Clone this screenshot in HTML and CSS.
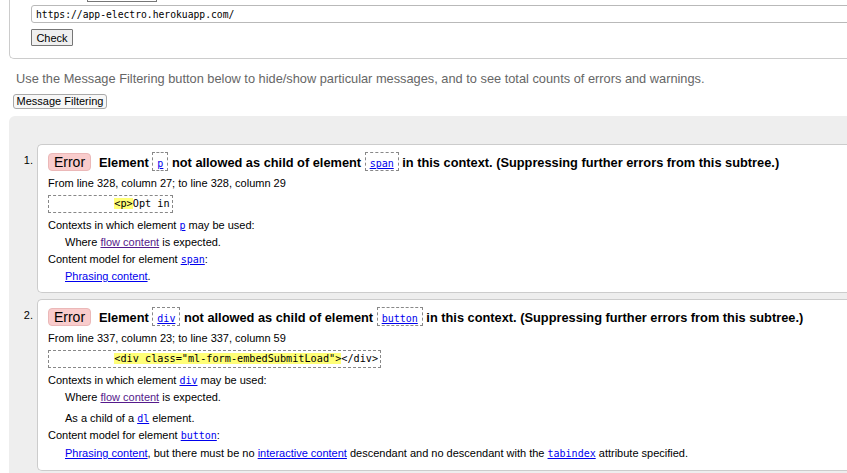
FILE: index.html
```html
<!DOCTYPE html>
<html lang="en">
<head>
<meta charset="utf-8">
<title>Validator</title>
<link rel="stylesheet" href="styles.css">
</head>
<body>
<div class="page">
  <form class="checkform">
    <div class="byrow"><span class="bylabel"></span><span class="select"></span></div>
    <input class="url" type="text" value="https://app-electro.herokuapp.com/">
    <div class="btnrow"><button type="button" class="check">Check</button></div>
  </form>
  <p class="hint">Use the Message Filtering button below to hide/show particular messages, and to see total counts of errors and warnings.</p>
  <button class="filter" type="button">Message Filtering</button>
  <div class="results">
    <ol class="messages">
      <li class="item">
        <span class="num">1.</span>
        <div class="msg">
          <p class="head"><span class="badge">Error</span><span class="title">Element <code class="tag"><a href="#p">p</a></code> not allowed as child of element <code class="tag"><a href="#span">span</a></code> in this context. (Suppressing further errors from this subtree.)</span></p>
          <p class="loc">From line 328, column 27; to line 328, column 29</p>
          <div class="extractrow"><code class="extract">          <mark>&lt;p&gt;</mark>Opt in</code></div>
          <p class="line">Contexts in which element <a class="cl" href="#p">p</a> may be used:</p>
          <p class="line indent">Where <a class="visited" href="#flow">flow content</a> is expected.</p>
          <p class="line">Content model for element <a class="cl" href="#span">span</a>:</p>
          <p class="line indent"><a href="#phrasing">Phrasing content</a>.</p>
        </div>
      </li>
      <li class="item">
        <span class="num">2.</span>
        <div class="msg">
          <p class="head"><span class="badge">Error</span><span class="title">Element <code class="tag"><a href="#div">div</a></code> not allowed as child of element <code class="tag"><a href="#button">button</a></code> in this context. (Suppressing further errors from this subtree.)</span></p>
          <p class="loc">From line 337, column 23; to line 337, column 59</p>
          <div class="extractrow"><code class="extract">          <mark>&lt;div class="ml-form-embedSubmitLoad"&gt;</mark>&lt;/div&gt;</code></div>
          <p class="line">Contexts in which element <a class="cl" href="#div">div</a> may be used:</p>
          <p class="line indent">Where <a class="visited" href="#flow">flow content</a> is expected.</p>
          <p class="line indent gap">As a child of a <a class="cl" href="#dl">dl</a> element.</p>
          <p class="line">Content model for element <a class="cl" href="#button">button</a>:</p>
          <p class="line indent last"><a href="#phrasing">Phrasing content</a>, but there must be no <a href="#interactive">interactive content</a> descendant and no descendant with the <a class="cl" href="#tabindex">tabindex</a> attribute specified.</p>
        </div>
      </li>
    </ol>
  </div>
</div>
</body>
</html>
```
FILE: styles.css
```css
html, body {
  margin: 0;
  padding: 0;
}
body {
  font-family: "Liberation Sans", Arial, sans-serif;
  color: #000;
  background: #fff;
  width: 847px;
  height: 473px;
  overflow: hidden;
}
.page {
  margin-right: -60px;
}
a {
  color: #0000ee;
  text-decoration: underline;
}
a.visited {
  color: #551a8b;
}
a.cl {
  font-family: "DejaVu Sans Mono", monospace;
  font-size: 10px;
}

/* top form */
.checkform {
  margin: -16px 0 0 9px;
  border-left: 1px solid #cccccc;
  border-bottom: 1px solid #cccccc;
  border-bottom-left-radius: 5px;
  padding: 0 0 12px 21px;
}
.byrow {
  height: 18px;
  display: flex;
  align-items: flex-end;
}
.bylabel {
  width: 50px;
  height: 18px;
}
.select {
  box-sizing: border-box;
  width: 70px;
  height: 16px;
  margin-left: 6px;
  border: 1px solid #767676;
  background: #fff;
}
.url {
  display: block;
  box-sizing: border-box;
  width: 900px;
  height: 18px;
  margin: 3px 0 0 0;
  padding: 0 4px;
  border: 1px solid #b9b9b9;
  border-radius: 3px;
  font-family: "DejaVu Sans Mono", monospace;
  font-size: 9.7px;
  color: #000;
  background: #fff;
}
.btnrow {
  margin-top: 6px;
  display: flex;
}
.check {
  box-sizing: border-box;
  height: 17px;
  width: 42px;
  padding: 0;
  border: 1px solid #767676;
  border-radius: 1px;
  background: #efefef;
  font-family: "Liberation Sans", Arial, sans-serif;
  font-size: 11px;
  color: #000;
}

/* hint */
.hint {
  margin: 12px 0 0 16px;
  font-size: 12.8px;
  line-height: 16px;
  color: #666666;
}
.filter {
  display: block;
  box-sizing: border-box;
  margin: 7px 0 0 13px;
  height: 15px;
  width: 94px;
  padding: 0;
  border: 1px solid #a9a9a9;
  border-radius: 3px;
  background: #f7f7f7;
  font-family: "Liberation Sans", Arial, sans-serif;
  font-size: 11px;
  line-height: 13px;
  color: #000;
}

/* results */
.results {
  margin: 7px 0 0 9px;
  background: #eeeeee;
  border-top-left-radius: 6px;
  padding: 28px 0 20px 0;
}
.messages {
  list-style: none;
  margin: 0;
  padding: 0;
  display: flex;
  flex-direction: column;
  gap: 6px;
}
.item {
  display: flex;
  align-items: flex-start;
}
.num {
  width: 24px;
  flex: none;
  text-align: right;
  padding-right: 4px;
  font-size: 11px;
  line-height: 19px;
  margin-top: 7px;
}
.msg {
  flex: 1;
  background: #fff;
  border: 1px solid #cccccc;
  border-right: none;
  border-radius: 5px 0 0 5px;
  padding: 7px 0 7px 10px;
  font-size: 11px;
}
.msg p {
  margin: 0;
}
.head {
  display: flex;
  align-items: center;
  height: 19px;
}
.badge {
  box-sizing: border-box;
  height: 18px;
  width: 43px;
  border: 1px solid #ebb8b8;
  border-radius: 4px;
  background: #f9cccc;
  font-size: 14px;
  line-height: 16px;
  text-align: center;
  margin-right: 8px;
}
.title {
  font-size: 12.8px;
  font-weight: bold;
  white-space: nowrap;
  line-height: 19px;
}
.tag {
  display: inline-block;
  border: 1px dashed #888888;
  padding: 4px 4px 0 4px;
  height: 13px;
  line-height: 13px;
  vertical-align: baseline;
  font-family: "DejaVu Sans Mono", monospace;
  font-size: 10px;
  font-weight: normal;
}
.loc {
  margin-top: 4px !important;
  line-height: 16px;
}
.extractrow {
  margin-top: 4px;
  display: flex;
}
.extract {
  display: block;
  box-sizing: border-box;
  height: 18px;
  border: 1px dashed #888888;
  padding: 0 2px 0 4px;
  white-space: pre;
  font-family: "DejaVu Sans Mono", monospace;
  font-size: 10.2px;
  line-height: 16px;
}
.extract mark {
  background: #ffff77;
  color: #000;
}
.line {
  line-height: 17px;
}
.extractrow + .line {
  margin-top: 4px;
}
.indent {
  padding-left: 17px;
}
.gap {
  margin-top: 4px !important;
}
.last {
  line-height: 19px;
}
```
